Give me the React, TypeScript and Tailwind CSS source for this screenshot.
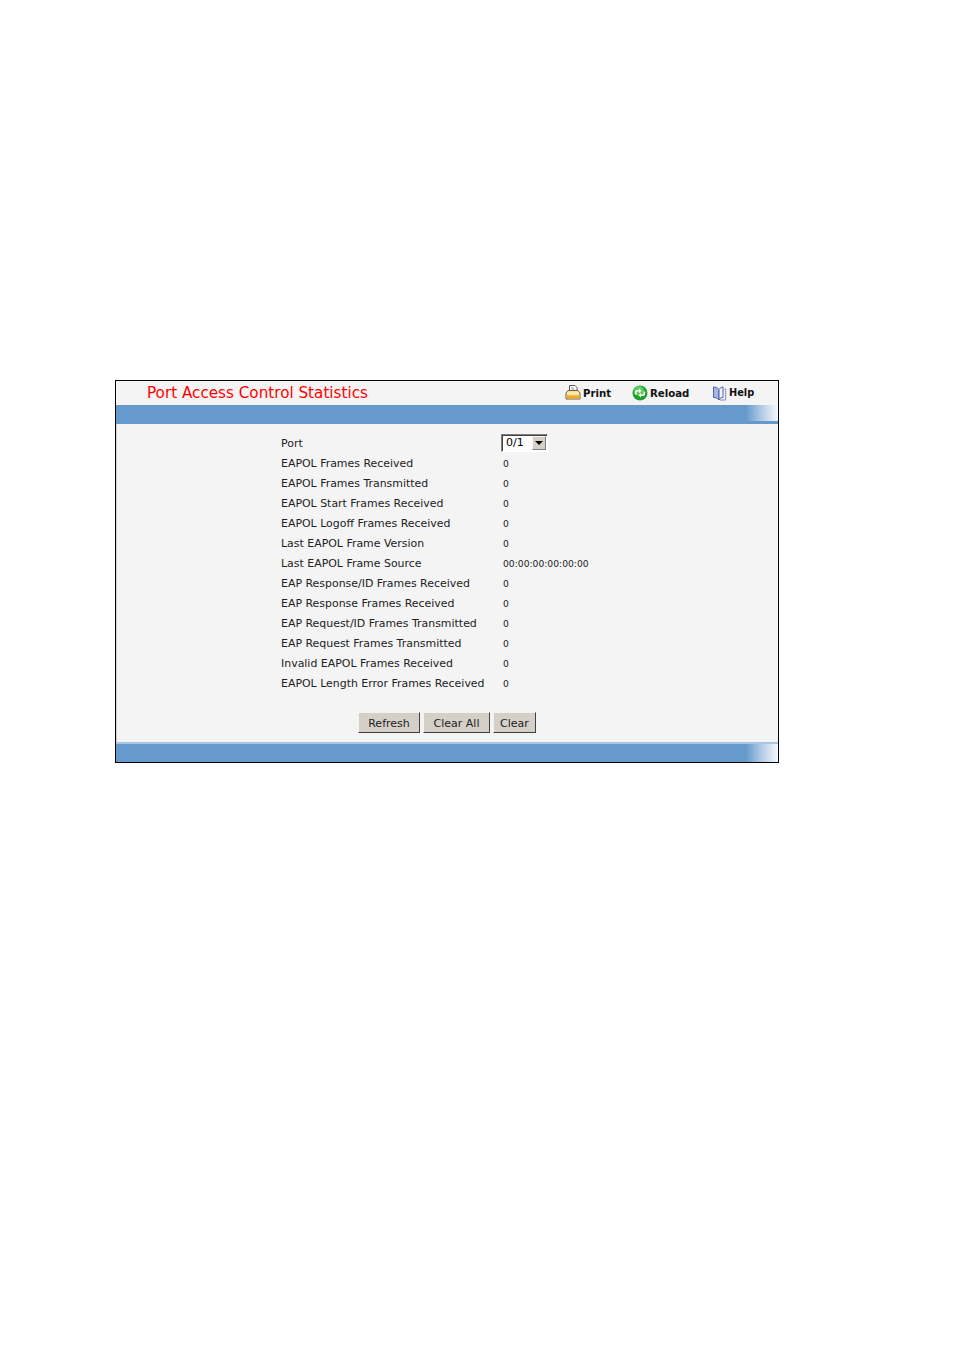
import React from 'react';

const rows = [
  ['EAPOL Frames Received', '0'],
  ['EAPOL Frames Transmitted', '0'],
  ['EAPOL Start Frames Received', '0'],
  ['EAPOL Logoff Frames Received', '0'],
  ['Last EAPOL Frame Version', '0'],
  ['Last EAPOL Frame Source', '00:00:00:00:00:00'],
  ['EAP Response/ID Frames Received', '0'],
  ['EAP Response Frames Received', '0'],
  ['EAP Request/ID Frames Transmitted', '0'],
  ['EAP Request Frames Transmitted', '0'],
  ['Invalid EAPOL Frames Received', '0'],
  ['EAPOL Length Error Frames Received', '0'],
];

const PrintIcon = () => (
  <svg width="16" height="15" viewBox="0 0 16 15">
    <path d="M4.500.5h5.500l2 2v5h-7.500z" fill="#fff" stroke="#5a5a5a" />
    <path d="M6 3h3M6 5h4" stroke="#999" />
    <path d="M1 8l2-2.500h10l2 2.500v6H1z" fill="#f7e08e" stroke="#6b6250" />
    <path d="M1.500 10.500h13v3h-13z" fill="#f0a830" />
    <path d="M2 8h12" stroke="#fff3c4" />
  </svg>
);

const ReloadIcon = () => (
  <svg width="16" height="16" viewBox="0 0 16 16">
    <circle cx="8" cy="8" r="7.500" fill="#1f9e2c" />
    <circle cx="7" cy="6" r="5" fill="#58cf58" />
    <path d="M2.800 9.500V7.500C2.800 5.800 4 5 5.500 5H7V3.200L9.500 5.700 7 8.200V6.500H5.800C5 6.500 4.500 7 4.500 7.800v1.700z" fill="#fff" />
    <path d="M13.200 6.500v2c0 1.700-1.200 2.500-2.700 2.500H9v1.800L6.500 10.300 9 7.800v1.700h1.200c.8 0 1.300-.5 1.300-1.300V6.500z" fill="#fff" />
  </svg>
);

const HelpIcon = () => (
  <svg width="15" height="15" viewBox="0 0 15 15">
    <path d="M7 3.500C5.500 1.500 3.500 1 1.500 1v10.500c2 0 4 .5 5.500 2.500z" fill="#aab6e6" stroke="#4f5fa5" />
    <path d="M7 3.500C8 2 9.500 1 11 1v10.500c-1.500 0-3 .5-4 2.500z" fill="#f1f3fc" stroke="#4f5fa5" />
    <path d="M12.500 3h1.200v11H8" fill="none" stroke="#7f8cc4" />
  </svg>
);

const Band = ({ className }: { className: string }) => (
  <div className={`flex bg-[#6699cc] ${className}`}>
    <div className="flex-1" />
    <div className="w-[32px] bg-gradient-to-r from-[#6699cc] via-[#b4cde6] to-[#f4f8fc]" />
  </div>
);

const ActionButton = ({ label, width }: { label: string; width: string }) => (
  <button
    type="button"
    className={`h-[21px] ${width} pt-[1px] bg-[#d4d0c8] border border-t-[#f4f3ef] border-l-[#f4f3ef] border-r-[#404040] border-b-[#404040] text-[11px] leading-none text-[#222222]`}
  >
    {label}
  </button>
);

const App: React.FC = () => {
  return (
    <div className="min-h-[1350px] bg-white pt-[380px] pl-[115px] font-['DejaVu_Sans',sans-serif]">
      <div className="w-[664px] h-[383px] border border-black bg-[#f4f4f4] flex flex-col">
        {/* title */}
        <div className="h-[24px] flex items-center pl-[31px] shrink-0">
          <div className="text-[15.200px] text-[#ff0000] leading-none pt-[2px] w-[418px]">Port Access Control Statistics</div>
          <div className="flex items-center gap-[2px] w-[67px] text-[10.200px] font-bold text-[#111111]">
            <PrintIcon />
            <span className="pt-[1px]">Print</span>
          </div>
          <div className="flex items-center gap-[2px] w-[80px] text-[10.200px] font-bold text-[#111111]">
            <ReloadIcon />
            <span className="pt-[1px]">Reload</span>
          </div>
          <div className="flex items-center gap-[2px] text-[9.800px] font-bold text-[#111111]">
            <HelpIcon />
            <span className="pt-[1px]">Help</span>
          </div>
        </div>
        <Band className="h-[19px] shrink-0 border-b-[3px] border-b-[#6699cc]" />

        {/* stats table */}
        <div className="flex-1 pl-[164px] pt-[9px] text-[10.950px] text-[#222222] border-l border-l-[#d4d0c8]">
          <div className="h-[20px] flex items-center">
            <div className="w-[220px] pt-[2px]">Port</div>
            <div className="w-[47px] h-[18px] mb-[1px] border border-t-[#808080] border-l-[#808080] border-r-white border-b-white bg-white flex items-center justify-between pl-[4px] text-[11px] text-black shadow-[inset_1px_1px_0_#404040]">
              <span className="pt-[2px]">0/1</span>
              <span className="w-[14px] h-[14px] mr-[1px] bg-[#d4d0c8] border border-t-[#f4f3ef] border-l-[#f4f3ef] border-r-[#808080] border-b-[#808080] flex items-center justify-center">
                <span className="w-0 h-0 border-x-[4px] border-x-transparent border-t-[4px] border-t-black" />
              </span>
            </div>
          </div>
          {rows.map(([label, value]) => (
            <div key={label} className="h-[20px] flex items-center">
              <div className="w-[222px] pt-[2px] whitespace-nowrap">{label}</div>
              <div className="text-[9.200px] pt-[1px]">{value}</div>
            </div>
          ))}
          <div className="flex gap-[3px] pl-[77px] pt-[19px]">
            <ActionButton label="Refresh" width="w-[62px]" />
            <ActionButton label="Clear All" width="w-[67px]" />
            <ActionButton label="Clear" width="w-[43px]" />
          </div>
        </div>

        <Band className="h-[20px] shrink-0 border-t-2 border-t-[#a9c6e3]" />
      </div>
    </div>
  );
};

export default App;
